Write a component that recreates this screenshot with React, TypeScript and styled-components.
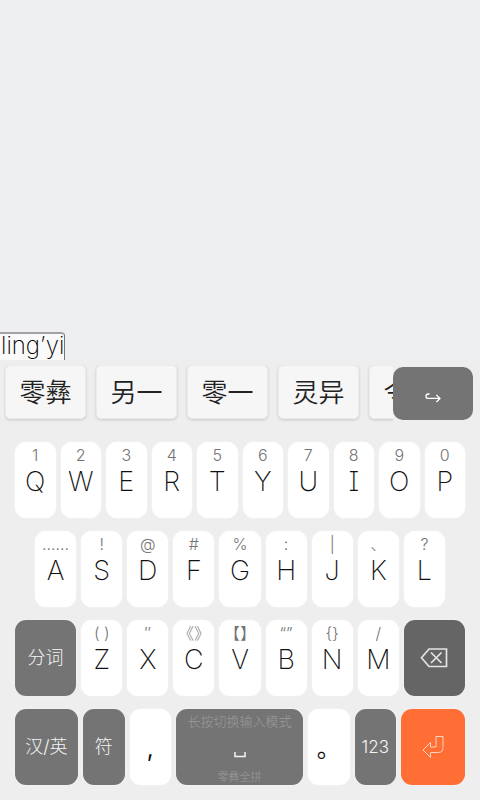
import React from "react";
import styled, { createGlobalStyle, css } from "styled-components";

const GlobalStyle = createGlobalStyle`
  *, *::before, *::after { box-sizing: border-box; }
  body {
    margin: 0;
    background: #eeeff1;
    font-family: Inter, "Noto Sans CJK SC", sans-serif;
    color: #222;
  }
  button { font: inherit; color: inherit; }
`;

const Screen = styled.main`
  display: flex;
  flex-direction: column;
  min-height: 100vh;
  overflow: hidden;
`;

const Canvas = styled.section`
  flex: 1;
  display: flex;
  align-items: flex-end;
`;

const Composition = styled.output`
  height: 28px;
  padding-left: 1px;
  border-top: 2px solid #a2a2a6;
  border-right: 1px solid #77777a;
  border-top-right-radius: 4px;
  background: #fafafa;
  color: #000;
  font-size: 24px;
  font-weight: 200;
  line-height: 24px;
`;

const Keyboard = styled.section`
  background: #eeeeee;
  padding-bottom: 15px;
`;

const CandidateBar = styled.div`
  position: relative;
  height: 82px;
  padding: 5px 4px 0;
`;

const CandidateList = styled.div`
  display: flex;
  gap: 10px;
  height: 60px;
  padding-left: 1px;
  margin-right: 83px;
  overflow: hidden;
`;

const Candidate = styled.button`
  flex: 0 0 81px;
  height: 54px;
  padding: 0 0 3px;
  border: 1px solid #ebebeb;
  border-radius: 5px;
  background: #f6f6f6;
  box-shadow: 0 1px 3px rgba(0, 0, 0, 0.16);
  font-size: 26px;
  font-weight: 350;
  white-space: nowrap;
`;

const MoreButton = styled.button`
  position: absolute;
  top: 7px;
  right: 7px;
  width: 80px;
  height: 53px;
  display: flex;
  align-items: center;
  justify-content: center;
  padding: 8px 0 0;
  border: 0;
  border-radius: 10px;
  background: #747474;
  color: #fff;
`;

const Rows = styled.div`
  display: flex;
  flex-direction: column;
  gap: 13px;
`;

const Row = styled.div<{ $inset?: boolean }>`
  display: flex;
  gap: 5px;
  padding: 0 ${(p) => (p.$inset ? 35 : 15)}px;
`;

type Tone = "light" | "dark" | "darker" | "accent";

const tones = {
  light: css`background: #fff; color: #222;`,
  dark: css`background: #747474; color: #f4f4f4;`,
  darker: css`background: #656565; color: #e4e4e4;`,
  accent: css`background: #ff6e35; color: #ffd6c4;`,
};

const Key = styled.button<{ $tone?: Tone; $grow?: number; $stacked?: boolean }>`
  flex: ${(p) => p.$grow ?? 41} 1 0;
  min-width: 0;
  height: 76px;
  display: flex;
  flex-direction: column;
  align-items: center;
  justify-content: ${(p) => (p.$stacked ? "flex-start" : "center")};
  padding: ${(p) => (p.$stacked ? 4 : 0)}px 0 0;
  border: 0;
  border-radius: 11px;
  box-shadow: 0 0 2px rgba(255, 255, 255, 0.8);
  font-size: 18px;
  font-weight: 300;
  line-height: 24px;
  white-space: nowrap;
  ${(p) => tones[p.$tone ?? "light"]}
`;

const Hint = styled.span`
  height: 19px;
  color: #747474;
  font-size: 16px;
  line-height: 19px;
`;

const Letter = styled.span`
  color: #111;
  font-size: 27px;
  font-weight: 200;
  line-height: 33px;
  font-feature-settings: "cv08";
`;

const Mark = styled.span`
  padding-top: 4px;
  color: #111;
  font-size: 24px;
  font-weight: 400;
`;

const Digits = styled.span`
  font-size: 17px;
`;

const SpaceCaption = styled.span<{ $small?: boolean }>`
  color: #9b9b9b;
  font-size: ${(p) => (p.$small ? 11 : 13)}px;
  line-height: 16px;
`;

const SpaceIcon = styled.span`
  flex: 1;
  display: flex;
  align-items: center;
  padding-top: 12px;
`;

const topRow = [["1", "Q"], ["2", "W"], ["3", "E"], ["4", "R"], ["5", "T"], ["6", "Y"], ["7", "U"], ["8", "I"], ["9", "O"], ["0", "P"]];
const homeRow = [["......", "A"], ["!", "S"], ["@", "D"], ["#", "F"], ["%", "G"], [":", "H"], ["|", "J"], ["、", "K"], ["?", "L"]];
const bottomRow = [["( )", "Z"], ["′′", "X"], ["《》", "C"], ["【】", "V"], ["“”", "B"], ["{}", "N"], ["/", "M"]];

const Letters = ({ keys }: { keys: string[][] }) => (
  <>
    {keys.map(([hint, letter]) => (
      <Key key={letter} $stacked>
        <Hint>{hint}</Hint>
        <Letter>{letter}</Letter>
      </Key>
    ))}
  </>
);

export default function App() {
  return (
    <Screen>
      <GlobalStyle />
      <Canvas>
        <Composition>ling’yi</Composition>
      </Canvas>
      <Keyboard>
        <CandidateBar>
          <CandidateList>
            {["零彝", "另一", "零一", "灵异", "令一"].map((word) => (
              <Candidate key={word}>{word}</Candidate>
            ))}
          </CandidateList>
          <MoreButton aria-label="More candidates">
            <svg width="16" height="10" viewBox="0 0 16 10" fill="none" stroke="currentColor" strokeWidth="1.3">
              <path d="M4.5 1H3.2a2.2 2.2 0 0 0 0 4.4H15M11.4 2l3.6 3.4L11.4 9" />
            </svg>
          </MoreButton>
        </CandidateBar>
        <Rows>
          <Row><Letters keys={topRow} /></Row>
          <Row $inset><Letters keys={homeRow} /></Row>
          <Row>
            <Key $tone="dark" $grow={61}>分词</Key>
            <Letters keys={bottomRow} />
            <Key $tone="darker" $grow={61} aria-label="Backspace">
              <svg width="28" height="20" viewBox="0 0 28 20" fill="none" stroke="currentColor" strokeWidth="1.7">
                <path d="M9 1H26.500V18.500H9L1.500 9.800ZM11 4.500l10.500 10.500M21.500 4.500L11 15" />
              </svg>
            </Key>
          </Row>
          <Row>
            <Key $tone="dark" $grow={62}>汉/英</Key>
            <Key $tone="dark">符</Key>
            <Key><Mark>,</Mark></Key>
            <Key $tone="dark" $grow={125} $stacked>
              <SpaceCaption>长按切换输入模式</SpaceCaption>
              <SpaceIcon>
                <svg width="12" height="6" viewBox="0 0 12 6" fill="none" stroke="currentColor" strokeWidth="1.5">
                  <path d="M1 0V4.500H11V0" />
                </svg>
              </SpaceIcon>
              <SpaceCaption $small>零彝全拼</SpaceCaption>
            </Key>
            <Key><Mark>。</Mark></Key>
            <Key $tone="dark"><Digits>123</Digits></Key>
            <Key $tone="accent" $grow={63} aria-label="Enter">
              <svg width="22" height="24" viewBox="0 0 22 24" fill="none" stroke="currentColor" strokeWidth="1">
                <path d="M14 1.500H21V12.500Q21 17.500 16.500 17.500H8.500V22.500L1 15L8.500 7.500V12H14Z" />
              </svg>
            </Key>
          </Row>
        </Rows>
      </Keyboard>
    </Screen>
  );
}
